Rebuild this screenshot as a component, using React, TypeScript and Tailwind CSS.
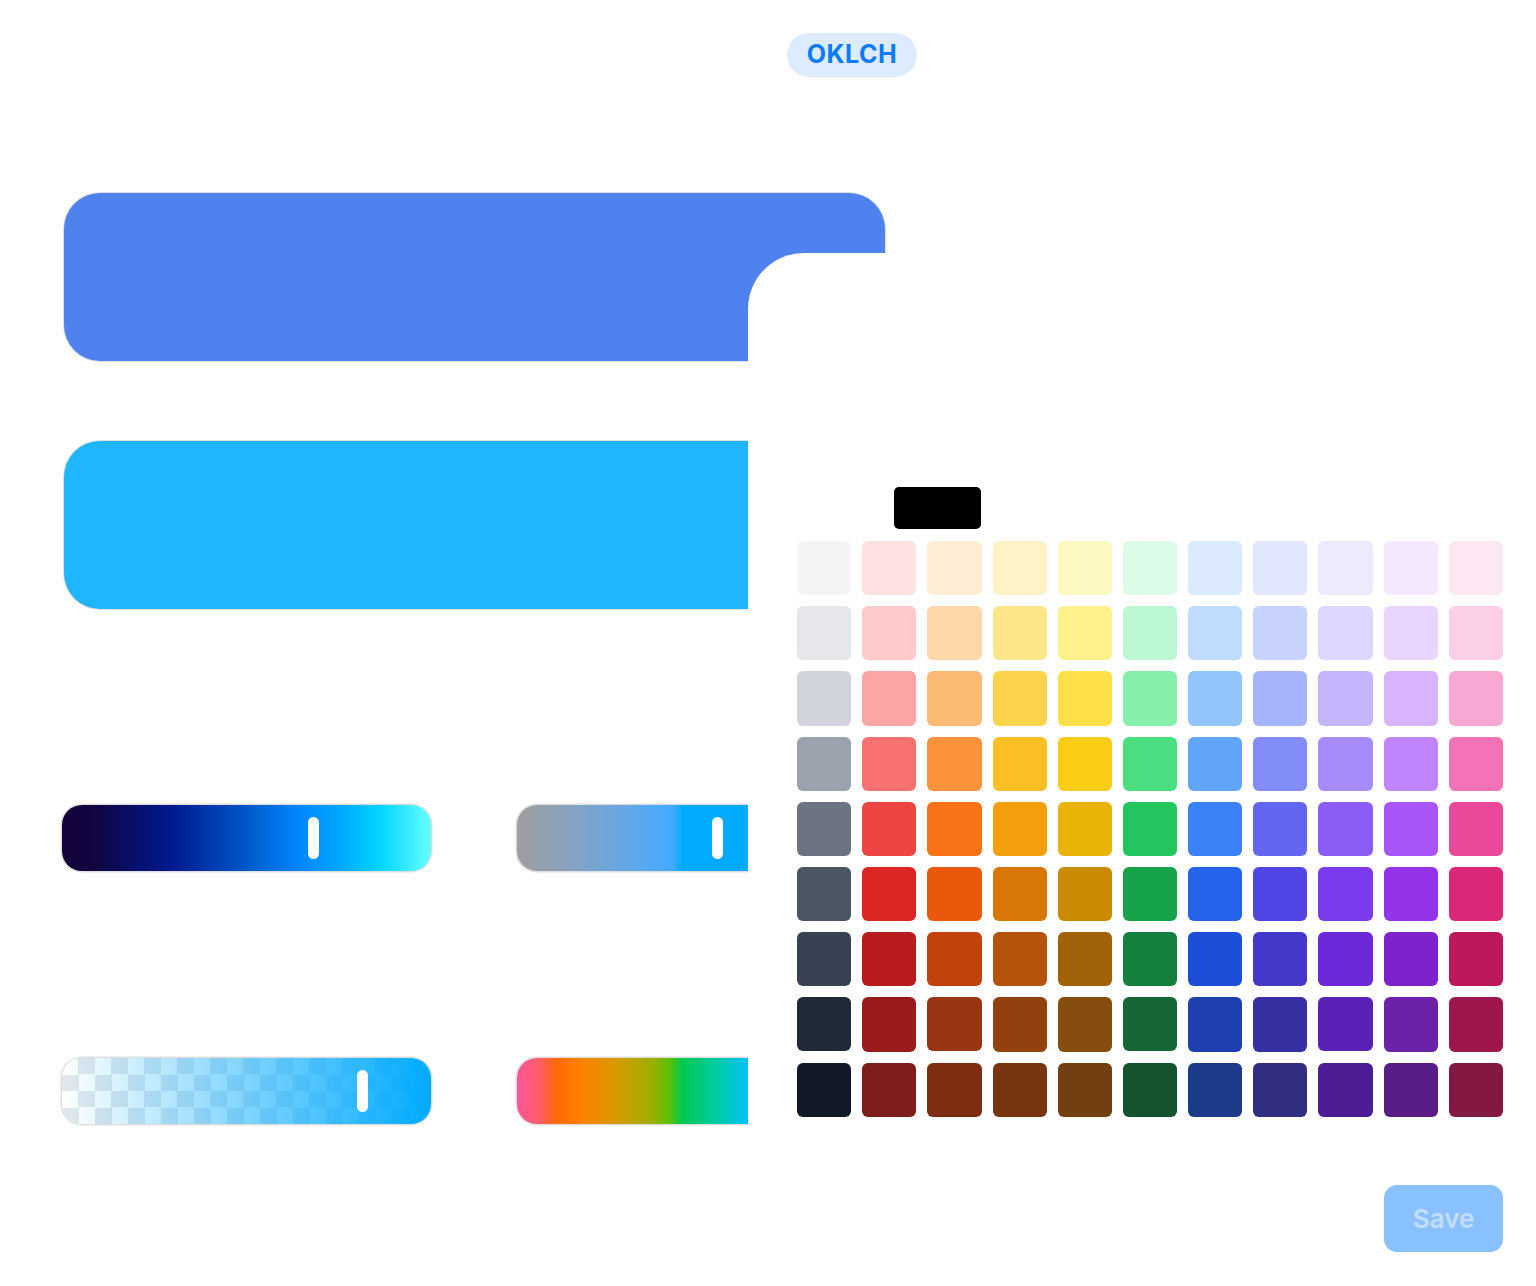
const palette = [
  ["bg-[#f3f4f6]", "bg-[#fee2e2]", "bg-[#ffedd5]", "bg-[#fef3c7]", "bg-[#fef9c3]", "bg-[#dcfce7]", "bg-[#dbeafe]", "bg-[#e0e7ff]", "bg-[#ede9fe]", "bg-[#f3e8ff]", "bg-[#fce7f3]"],
  ["bg-[#e5e7eb]", "bg-[#fecaca]", "bg-[#fed7aa]", "bg-[#fde68a]", "bg-[#fef08a]", "bg-[#bbf7d0]", "bg-[#bfdbfe]", "bg-[#c7d2fe]", "bg-[#ddd6fe]", "bg-[#e9d5ff]", "bg-[#fbcfe8]"],
  ["bg-[#d1d5db]", "bg-[#fca5a5]", "bg-[#fdba74]", "bg-[#fcd34d]", "bg-[#fde047]", "bg-[#86efac]", "bg-[#93c5fd]", "bg-[#a5b4fc]", "bg-[#c4b5fd]", "bg-[#d8b4fe]", "bg-[#f9a8d4]"],
  ["bg-[#9ca3af]", "bg-[#f87171]", "bg-[#fb923c]", "bg-[#fbbf24]", "bg-[#facc15]", "bg-[#4ade80]", "bg-[#60a5fa]", "bg-[#818cf8]", "bg-[#a78bfa]", "bg-[#c084fc]", "bg-[#f472b6]"],
  ["bg-[#6b7280]", "bg-[#ef4444]", "bg-[#f97316]", "bg-[#f59e0b]", "bg-[#eab308]", "bg-[#22c55e]", "bg-[#3b82f6]", "bg-[#6366f1]", "bg-[#8b5cf6]", "bg-[#a855f7]", "bg-[#ec4899]"],
  ["bg-[#4b5563]", "bg-[#dc2626]", "bg-[#ea580c]", "bg-[#d97706]", "bg-[#ca8a04]", "bg-[#16a34a]", "bg-[#2563eb]", "bg-[#4f46e5]", "bg-[#7c3aed]", "bg-[#9333ea]", "bg-[#db2777]"],
  ["bg-[#374151]", "bg-[#b91c1c]", "bg-[#c2410c]", "bg-[#b45309]", "bg-[#a16207]", "bg-[#15803d]", "bg-[#1d4ed8]", "bg-[#4338ca]", "bg-[#6d28d9]", "bg-[#7e22ce]", "bg-[#be185d]"],
  ["bg-[#1f2937]", "bg-[#991b1b]", "bg-[#9a3412]", "bg-[#92400e]", "bg-[#854d0e]", "bg-[#166534]", "bg-[#1e40af]", "bg-[#3730a3]", "bg-[#5b21b6]", "bg-[#6b21a8]", "bg-[#9d174d]"],
  ["bg-[#111827]", "bg-[#7f1d1d]", "bg-[#7c2d12]", "bg-[#78350f]", "bg-[#713f12]", "bg-[#14532d]", "bg-[#1e3a8a]", "bg-[#312e81]", "bg-[#4c1d95]", "bg-[#581c87]", "bg-[#831843]"],
];

function Slider({ bg, thumb, children }: { bg: string; thumb?: string; children?: any }) {
  return (
    <div className={`relative h-[66px] w-[369px] shrink-0 overflow-hidden rounded-[20px] shadow-[0_0_0_1.5px_rgba(0,0,0,0.13)] ${bg}`}>
      {children}
      {thumb && <div className={`absolute top-[12px] h-[42px] w-[11px] rounded-full bg-white ${thumb}`} />}
    </div>
  );
}

export default function App() {
  return (
    <div className="relative h-[1286px] w-[1536px] overflow-hidden bg-white font-['Inter',sans-serif]">
      <div className="flex flex-col pl-[64px]">
        <div className="pl-[723px] pt-[33px]">
          <div className="flex h-[44px] w-[130px] items-center justify-center rounded-full bg-[#dcebfd] text-[25px] font-bold tracking-[0.5px] text-[#0a7aff]">
            OKLCH
          </div>
        </div>

        <div className="mt-[116px] h-[168px] w-[821px] rounded-[36px] bg-[#4f81ef] shadow-[0_0_0_1px_rgba(0,0,0,0.12)]" />
        <div className="mt-[80px] h-[168px] w-[821px] rounded-[36px] bg-[#1fb6ff] shadow-[0_0_0_1px_rgba(0,0,0,0.12)]" />

        <div className="-ml-[2px] mt-[196px] flex gap-[86px]">
          <Slider
            bg="bg-[linear-gradient(90deg,#14033a_0%,#11043f_8%,#001990_30%,#0058c8_50%,#0088ff_65%,#00a6ff_75%,#00d4ff_86%,#66ffff_100%)]"
            thumb="left-[246px]"
          />
          <Slider
            bg="bg-[linear-gradient(90deg,#9e9e9e_0%,#88a3c0_14%,#6aa6df_27%,#45aaff_42%,#00aaff_45%,#00aaff_100%)]"
            thumb="left-[195px]"
          />
        </div>

        <div className="-ml-[2px] mt-[187px] flex gap-[86px]">
          <Slider bg="bg-[repeating-conic-gradient(#e3e8ec_0%_25%,#ffffff_0%_50%)] bg-[length:33px_33px]" thumb="left-[295px]">
            <div className="absolute inset-0 bg-[linear-gradient(90deg,rgba(0,170,255,0)_0%,rgba(0,170,255,0.5)_50%,#00aaff_100%)]" />
          </Slider>
          <Slider bg="bg-[linear-gradient(90deg,#ff5599_0%,#ff5d6a_6%,#ff6a00_11%,#ff8000_17%,#d69a00_27%,#a2ad00_36%,#5fc000_41%,#00c853_45%,#00cca0_54%,#00bfff_63%,#3c9bff_72%,#7b7bff_81%,#c060f0_90%,#ff5599_100%)]" />
        </div>
      </div>

      <div className="absolute bottom-0 left-[748px] right-0 top-[253px] flex flex-col rounded-tl-[56px] bg-white pl-[49px] pr-[33px] pt-[288px]">
        <div className="absolute left-[146px] top-[234px] h-[42px] w-[87px] rounded-[5px] bg-black" />

        <div className="grid w-[706px] grid-cols-11 gap-x-[11px] gap-y-[11px]">
          {palette.map((row, r) =>
            row.map((c, i) => <div key={`${r}-${i}`} className={`aspect-square rounded-[6px] ${c}`} />)
          )}
        </div>

        <div className="mt-[68px] flex justify-end">
          <button className="flex h-[67px] w-[119px] items-center justify-center rounded-[13px] bg-[#89c1fe] text-[26px] font-semibold text-[#c4defd]">
            Save
          </button>
        </div>
      </div>
    </div>
  );
}
